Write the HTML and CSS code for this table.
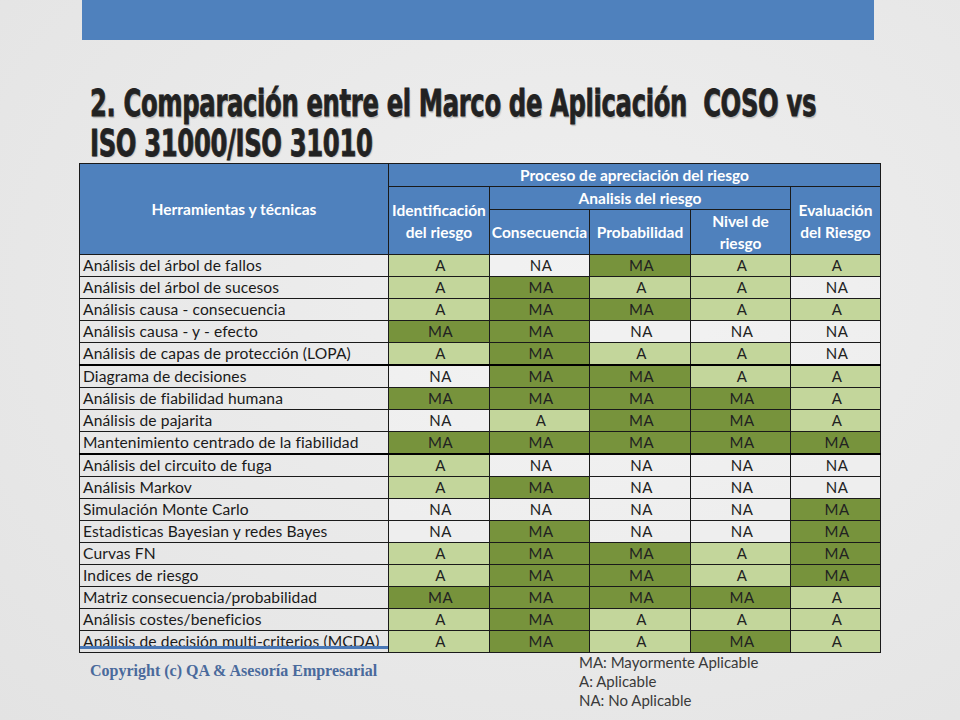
FILE: index.html
```html
<!DOCTYPE html>
<html lang="es">
<head>
<meta charset="utf-8">
<title>Comparación COSO vs ISO 31000/ISO 31010</title>
<link rel="stylesheet" href="styles.css">
</head>
<body>
<div class="slide">
  <div class="topbar"></div>
  <h1 class="title">2. Comparación entre el Marco de Aplicación&nbsp; COSO vs<br>ISO 31000/ISO 31010</h1>
  <table class="grid">
    <colgroup>
      <col class="c0"><col class="c1"><col class="c2"><col class="c3"><col class="c4"><col class="c5">
    </colgroup>
    <thead>
      <tr class="h1">
        <th rowspan="3">Herramientas y técnicas</th>
        <th colspan="5">Proceso de apreciación del riesgo</th>
      </tr>
      <tr class="h2">
        <th rowspan="2">Identificación<br>del riesgo</th>
        <th colspan="3">Analisis del riesgo</th>
        <th rowspan="2">Evaluación<br>del Riesgo</th>
      </tr>
      <tr class="h3">
        <th>Consecuencia</th>
        <th>Probabilidad</th>
        <th>Nivel de<br>riesgo</th>
      </tr>
    </thead>
    <tbody>
      <tr><td class="name">Análisis del árbol de fallos</td><td class="a">A</td><td class="na">NA</td><td class="ma">MA</td><td class="a">A</td><td class="a">A</td></tr>
      <tr><td class="name">Análisis del árbol de sucesos</td><td class="a">A</td><td class="ma">MA</td><td class="a">A</td><td class="a">A</td><td class="na">NA</td></tr>
      <tr><td class="name">Análisis causa - consecuencia</td><td class="a">A</td><td class="ma">MA</td><td class="ma">MA</td><td class="a">A</td><td class="a">A</td></tr>
      <tr><td class="name">Análisis causa - y - efecto</td><td class="ma">MA</td><td class="ma">MA</td><td class="na">NA</td><td class="na">NA</td><td class="na">NA</td></tr>
      <tr class="sep"><td class="name">Análisis de capas de protección (LOPA)</td><td class="a">A</td><td class="ma">MA</td><td class="a">A</td><td class="a">A</td><td class="na">NA</td></tr>
      <tr><td class="name">Diagrama de decisiones</td><td class="na">NA</td><td class="ma">MA</td><td class="ma">MA</td><td class="a">A</td><td class="a">A</td></tr>
      <tr><td class="name">Análisis de fiabilidad humana</td><td class="ma">MA</td><td class="ma">MA</td><td class="ma">MA</td><td class="ma">MA</td><td class="a">A</td></tr>
      <tr><td class="name">Análisis de pajarita</td><td class="na">NA</td><td class="a">A</td><td class="ma">MA</td><td class="ma">MA</td><td class="a">A</td></tr>
      <tr class="sep"><td class="name">Mantenimiento centrado de la fiabilidad</td><td class="ma">MA</td><td class="ma">MA</td><td class="ma">MA</td><td class="ma">MA</td><td class="ma">MA</td></tr>
      <tr><td class="name">Análisis del circuito de fuga</td><td class="a">A</td><td class="na">NA</td><td class="na">NA</td><td class="na">NA</td><td class="na">NA</td></tr>
      <tr><td class="name">Análisis Markov</td><td class="a">A</td><td class="ma">MA</td><td class="na">NA</td><td class="na">NA</td><td class="na">NA</td></tr>
      <tr><td class="name">Simulación Monte Carlo</td><td class="na">NA</td><td class="na">NA</td><td class="na">NA</td><td class="na">NA</td><td class="ma">MA</td></tr>
      <tr><td class="name">Estadisticas Bayesian y redes Bayes</td><td class="na">NA</td><td class="ma">MA</td><td class="na">NA</td><td class="na">NA</td><td class="ma">MA</td></tr>
      <tr><td class="name">Curvas FN</td><td class="a">A</td><td class="ma">MA</td><td class="ma">MA</td><td class="a">A</td><td class="ma">MA</td></tr>
      <tr><td class="name">Indices de riesgo</td><td class="a">A</td><td class="ma">MA</td><td class="ma">MA</td><td class="a">A</td><td class="ma">MA</td></tr>
      <tr><td class="name">Matriz consecuencia/probabilidad</td><td class="ma">MA</td><td class="ma">MA</td><td class="ma">MA</td><td class="ma">MA</td><td class="a">A</td></tr>
      <tr><td class="name">Análisis costes/beneficios</td><td class="a">A</td><td class="ma">MA</td><td class="a">A</td><td class="a">A</td><td class="a">A</td></tr>
      <tr><td class="name underline">Análisis de decisión multi-criterios (MCDA)</td><td class="a">A</td><td class="ma">MA</td><td class="a">A</td><td class="ma">MA</td><td class="a">A</td></tr>
    </tbody>
  </table>
  <div class="footer">
    <div class="copyright">Copyright (c) QA &amp; Asesoría Empresarial</div>
    <ul class="legend">
      <li>MA: Mayormente Aplicable</li>
      <li>A: Aplicable</li>
      <li>NA: No Aplicable</li>
    </ul>
  </div>
</div>
</body>
</html>
```

FILE: styles.css
```css
html, body {
  margin: 0;
  padding: 0;
}

body {
  width: 960px;
  height: 720px;
  overflow: hidden;
  background: #e8e8e8;
  font-family: "Lato", "Open Sans", sans-serif;
}

.slide {
  width: 960px;
  height: 720px;
  overflow: hidden;
  background: radial-gradient(ellipse at 60% 40%, #efefef 0%, #e8e8e8 60%, #e3e3e3 100%);
}

.topbar {
  margin-left: 82px;
  width: 792px;
  height: 40px;
  background: #4f81bd;
}

.title {
  margin: 44px 0 0 90px;
  width: 780px;
  font-family: "DejaVu Sans", sans-serif;
  font-stretch: condensed;
  font-weight: bold;
  font-size: 27px;
  line-height: 27.7px;
  letter-spacing: -0.35px;
  color: #222222;
  white-space: nowrap;
  text-shadow: 1px 1px 1px rgba(0, 0, 0, 0.2);
  -webkit-text-stroke: 0.55px #222222;
  transform: scaleY(1.407);
  transform-origin: left top;
}

.grid {
  margin: 23.6px 0 0 79px;
  width: 801px;
  border-collapse: collapse;
  table-layout: fixed;
  border: 1px solid #111;
}

.c0 { width: 309px; }
.c1 { width: 101px; }
.c2 { width: 100px; }
.c3 { width: 101px; }
.c4 { width: 100px; }
.c5 { width: 90px; }

.grid th {
  background: #4f81bd;
  color: #ffffff;
  font-weight: bold;
  font-size: 15.5px;
  line-height: 22px;
  border: 1px solid #1a1a1a;
  padding: 0;
  text-align: center;
  white-space: nowrap;
}

.h1 { height: 23px; }
.h2 { height: 22px; }
.h3 { height: 44px; }

.grid td {
  height: 21px;
  border: 1px solid #1a1a1a;
  padding: 0 0 0 3px;
  font-size: 15px;
  line-height: 21px;
  letter-spacing: 0.5px;
  color: #222222;
  text-align: center;
  white-space: nowrap;
  overflow: hidden;
}

.grid td.name {
  text-align: left;
  font-size: 15.6px;
  color: #1a1a1a;
  letter-spacing: 0.1px;
}

.grid .sep td {
  border-bottom: 2px solid #000;
}

.grid td.a { background: #c3d69b; }
.grid td.ma { background: #77933c; }
.grid td.na { background: rgba(255, 255, 255, 0.22); }

.grid td.underline {
  position: relative;
}

.grid td.underline::after {
  content: "";
  position: absolute;
  left: 0;
  right: 0;
  bottom: 3px;
  height: 3px;
  background: #4a78b6;
}

.footer {
  display: flex;
  align-items: flex-start;
}

.copyright {
  margin: 9px 0 0 90px;
  width: 489px;
  font-family: "Liberation Serif", serif;
  font-weight: bold;
  font-size: 16px;
  color: #4a6a9c;
}

.legend {
  list-style: none;
  margin: 0;
  padding: 0;
  font-size: 15px;
  line-height: 19px;
  color: #3a3a3a;
}
```
